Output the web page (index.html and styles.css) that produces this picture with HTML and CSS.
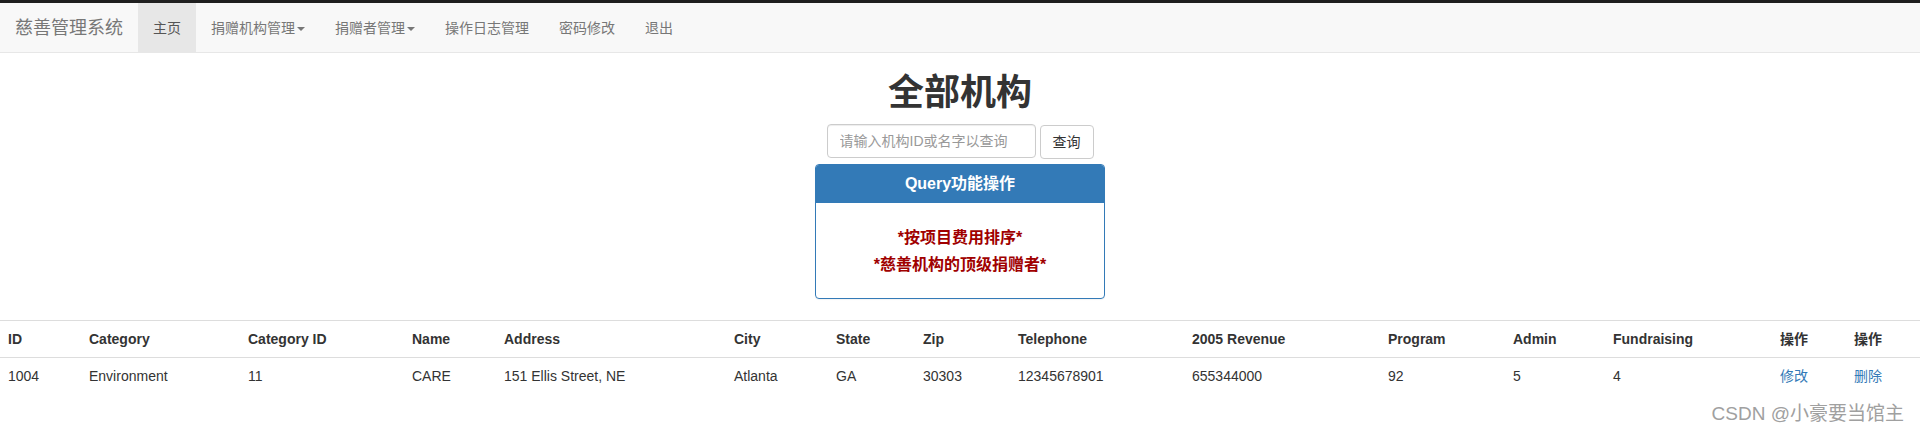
FILE: index.html
```html
<!DOCTYPE html>
<html lang="zh-CN">
<head>
<meta charset="utf-8">
<title>全部机构</title>
<link rel="stylesheet" href="styles.css">
</head>
<body>
<div class="topbar"></div>
<nav class="navbar">
  <a class="brand" href="#">慈善管理系统</a>
  <ul class="nav">
    <li class="active"><a href="#">主页</a></li>
    <li><a href="#">捐赠机构管理<span class="caret"></span></a></li>
    <li><a href="#">捐赠者管理<span class="caret"></span></a></li>
    <li><a href="#">操作日志管理</a></li>
    <li><a href="#">密码修改</a></li>
    <li><a href="#">退出</a></li>
  </ul>
</nav>

<h1 class="title">全部机构</h1>

<form class="search">
  <input class="search-input" type="text" placeholder="请输入机构ID或名字以查询">
  <button class="btn" type="button">查询</button>
</form>

<div class="panel">
  <div class="panel-heading"><h3 class="panel-title">Query功能操作</h3></div>
  <div class="panel-body">
    <div class="q-line">*按项目费用排序*</div>
    <div class="q-line">*慈善机构的顶级捐赠者*</div>
  </div>
</div>

<table class="table">
  <colgroup>
    <col class="c1"><col class="c2"><col class="c3"><col class="c4"><col class="c5">
    <col class="c6"><col class="c7"><col class="c8"><col class="c9"><col class="c10">
    <col class="c11"><col class="c12"><col class="c13"><col class="c14"><col class="c15">
  </colgroup>
  <tbody>
    <tr>
      <th>ID</th><th>Category</th><th>Category ID</th><th>Name</th><th>Address</th>
      <th>City</th><th>State</th><th>Zip</th><th>Telephone</th><th>2005 Revenue</th>
      <th>Program</th><th>Admin</th><th>Fundraising</th><th>操作</th><th>操作</th>
    </tr>
    <tr>
      <td>1004</td><td>Environment</td><td>11</td><td>CARE</td><td>151 Ellis Street, NE</td>
      <td>Atlanta</td><td>GA</td><td>30303</td><td>12345678901</td><td>655344000</td>
      <td>92</td><td>5</td><td>4</td><td><a href="#">修改</a></td><td><a href="#">删除</a></td>
    </tr>
  </tbody>
</table>

<div class="watermark">CSDN @小豪要当馆主</div>
</body>
</html>
```

FILE: styles.css
```css
* { box-sizing: border-box; }

html, body {
  margin: 0;
  padding: 0;
  background: #fff;
}

body {
  font-family: "Liberation Sans", "Noto Sans CJK SC", sans-serif;
  font-size: 14px;
  line-height: 20px;
  color: #333;
  position: relative;
  min-height: 433px;
}

a { color: #337ab7; text-decoration: none; }

.topbar {
  height: 3px;
  background: #1f1f1f;
}

.navbar {
  display: flex;
  align-items: stretch;
  background: #f8f8f8;
  border-bottom: 1px solid #e7e7e7;
  margin-bottom: 20px;
}

.brand {
  display: block;
  padding: 15px 15px 14px;
  font-size: 18px;
  line-height: 20px;
  color: #777;
}

.nav {
  display: flex;
  list-style: none;
  margin: 0;
  padding: 0;
}

.nav a {
  display: block;
  padding: 15px 15px 14px;
  line-height: 20px;
  color: #777;
}

.nav .active a {
  background: #e7e7e7;
  color: #555;
}

.caret {
  display: inline-block;
  width: 0;
  height: 0;
  margin-left: 2px;
  vertical-align: middle;
  border-top: 4px solid #777;
  border-left: 4px solid transparent;
  border-right: 4px solid transparent;
}

.title {
  margin: 0 0 11px;
  text-align: center;
  font-size: 36px;
  line-height: 1.1;
  font-weight: 700;
  color: #333;
}

.search {
  display: flex;
  justify-content: center;
  align-items: flex-start;
  gap: 4px;
  margin: 0 0 5px;
}

.search-input {
  width: 209px;
  height: 34px;
  padding: 6px 12px;
  font-family: inherit;
  font-size: 14px;
  color: #555;
  border: 1px solid #ccc;
  border-radius: 4px;
  box-shadow: inset 0 1px 1px rgba(0,0,0,.075);
  outline: none;
}

.search-input::placeholder { color: #999; }

.btn {
  height: 34px;
  margin-top: 1px;
  padding: 6px 12px;
  font-family: inherit;
  font-size: 14px;
  line-height: 20px;
  color: #333;
  background: #fff;
  border: 1px solid #ccc;
  border-radius: 4px;
}

.panel {
  width: 290px;
  margin: 0 auto 21px;
  border: 1px solid #337ab7;
  border-radius: 4px;
  box-shadow: 0 1px 1px rgba(0,0,0,.05);
  text-align: center;
}

.panel-heading {
  padding: 10px 15px;
  background: #337ab7;
  border-bottom: 1px solid #337ab7;
  border-radius: 3px 3px 0 0;
}

.panel-title {
  margin: 0;
  font-size: 16px;
  line-height: 1.1;
  font-weight: 700;
  color: #fff;
}

.panel-body {
  padding: 21px 15px 20px;
}

.q-line {
  font-size: 16px;
  line-height: 27px;
  font-weight: 700;
  color: #a00000;
}

.table {
  width: 100%;
  border-collapse: collapse;
  border-spacing: 0;
  table-layout: fixed;
}

.table th, .table td {
  padding: 8px;
  line-height: 20px;
  text-align: left;
  vertical-align: top;
  border-top: 1px solid #ddd;
  white-space: nowrap;
}

.table th { font-weight: 700; }

.c1 { width: 81px; }
.c2 { width: 159px; }
.c3 { width: 164px; }
.c4 { width: 92px; }
.c5 { width: 230px; }
.c6 { width: 102px; }
.c7 { width: 87px; }
.c8 { width: 95px; }
.c9 { width: 174px; }
.c10 { width: 196px; }
.c11 { width: 125px; }
.c12 { width: 100px; }
.c13 { width: 167px; }
.c14 { width: 74px; }
.c15 { width: 74px; }

.watermark {
  position: absolute;
  right: 16px;
  top: 402px;
  font-size: 19px;
  line-height: 24px;
  color: #a0a0a0;
  white-space: nowrap;
}
```
